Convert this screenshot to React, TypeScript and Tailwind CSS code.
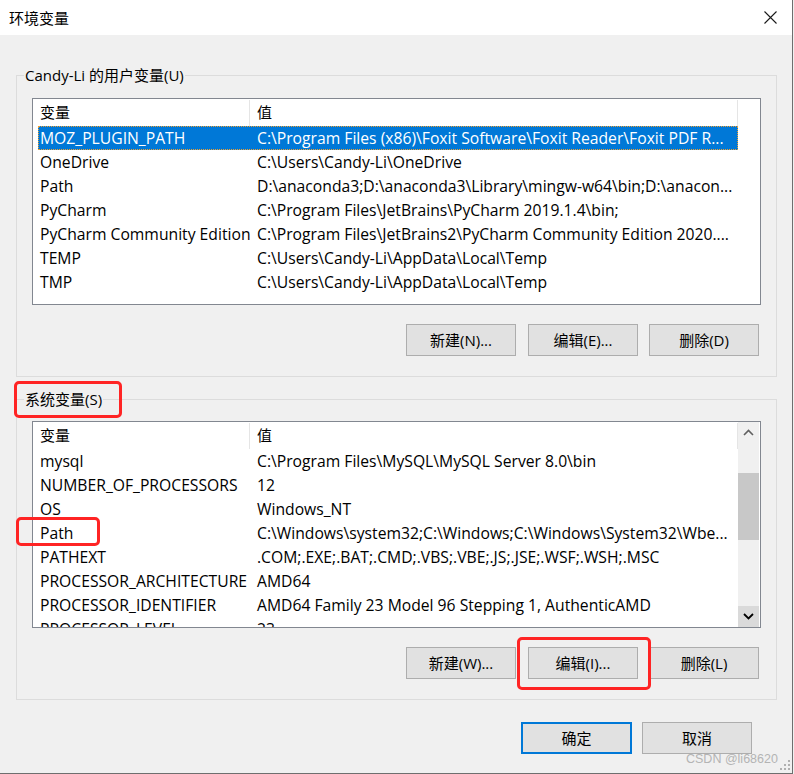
import React from "react";

type Row = [string, string];

const userRows: Row[] = [
  ["MOZ_PLUGIN_PATH", String.raw`C:\Program Files (x86)\Foxit Software\Foxit Reader\Foxit PDF R...`],
  ["OneDrive", String.raw`C:\Users\Candy-Li\OneDrive`],
  ["Path", String.raw`D:\anaconda3;D:\anaconda3\Library\mingw-w64\bin;D:\anacon...`],
  ["PyCharm", String.raw`C:\Program Files\JetBrains\PyCharm 2019.1.4\bin;`],
  ["PyCharm Community Edition", String.raw`C:\Program Files\JetBrains2\PyCharm Community Edition 2020....`],
  ["TEMP", String.raw`C:\Users\Candy-Li\AppData\Local\Temp`],
  ["TMP", String.raw`C:\Users\Candy-Li\AppData\Local\Temp`],
];

const sysRows: Row[] = [
  ["mysql", String.raw`C:\Program Files\MySQL\MySQL Server 8.0\bin`],
  ["NUMBER_OF_PROCESSORS", "12"],
  ["OS", "Windows_NT"],
  ["Path", String.raw`C:\Windows\system32;C:\Windows;C:\Windows\System32\Wbe...`],
  ["PATHEXT", ".COM;.EXE;.BAT;.CMD;.VBS;.VBE;.JS;.JSE;.WSF;.WSH;.MSC"],
  ["PROCESSOR_ARCHITECTURE", "AMD64"],
  ["PROCESSOR_IDENTIFIER", "AMD64 Family 23 Model 96 Stepping 1, AuthenticAMD"],
  ["PROCESSOR_LEVEL", "23"],
];

const Btn = ({ label, focus }: { label: string; focus?: boolean }) => (
  <button
    className={`h-[32px] w-[110px] bg-[#e1e1e1] text-[15px] text-black ${
      focus ? "border-2 border-[#0078d7] w-[111px]" : "border border-[#adadad]"
    }`}
  >
    {label}
  </button>
);

function Scrollbar() {
  return (
    <div className="w-[21px] h-full bg-[#f0f0f0] flex flex-col">
      <div className="h-[21px] flex items-center justify-center">
        <svg width="11" height="7" viewBox="0 0 11 7">
          <polyline points="1,6 5.5,1.5 10,6" fill="none" stroke="#606060" strokeWidth="1.6" />
        </svg>
      </div>
      <div className="h-[30px]" />
      <div className="h-[67px] bg-[#c8c8c8]" />
      <div className="flex-1" />
      <div className="h-[21px] bg-[#dadada] flex items-center justify-center">
        <svg width="11" height="7" viewBox="0 0 11 7">
          <polyline points="1,1 5.5,5.5 10,1" fill="none" stroke="#000" strokeWidth="1.8" />
        </svg>
      </div>
    </div>
  );
}

function VarList({ rows, selected, scroll }: { rows: Row[]; selected?: number; scroll?: boolean }) {
  return (
    <div className="w-[729px] h-[207px] border border-[#828790] bg-white flex overflow-hidden text-[15.7px]">
      <div className="w-[705px] flex flex-col">
        <div className="h-[27px] flex items-stretch shrink-0 text-[15px]">
          <div className="w-[217px] pl-[7px] pb-[2px] flex items-center border-r border-[#e5e5e5] mt-[1px]">变量</div>
          <div className="w-[488px] pl-[7px] pb-[2px] flex items-center border-r border-[#e5e5e5] mt-[1px]">值</div>
        </div>
        {rows.map(([k, v], i) => (
          <div
            key={k + i}
            className={`h-[24px] shrink-0 ml-[5px] w-[700px] flex items-center ${
              i === selected
                ? "bg-[#0078d7] text-white outline-1 outline-dotted outline-[#f0a030] -outline-offset-1"
                : ""
            }`}
          >
            <div className="w-[212px] pl-[2px] whitespace-nowrap overflow-hidden">{k}</div>
            <div className="flex-1 pl-[7px] whitespace-nowrap overflow-hidden">{v}</div>
          </div>
        ))}
      </div>
      {scroll && <Scrollbar />}
    </div>
  );
}

const RedBox = ({ cls }: { cls: string }) => (
  <span className={`absolute border-[3px] border-[#ff2424] rounded-[5px] pointer-events-none ${cls}`} />
);

export default function App() {
  return (
    <div
      className="w-[794px] h-[774px] bg-[#f0f0f0] relative text-[15px] text-black leading-[20px]"
      style={{ fontFamily: '"Open Sans", "Noto Sans CJK SC", sans-serif' }}
    >
      <div className="w-[793px] h-[774px] border-r border-b border-[#6e6e6e] flex flex-col">
        {/* title bar */}
        <div className="h-[35px] bg-white flex items-center justify-between pl-[9px] pr-[15px] shrink-0">
          <span className="text-[15px]">环境变量</span>
          <svg width="13" height="13" viewBox="0 0 13 13">
            <path d="M0.5 0.5 L12.5 12.5 M12.5 0.5 L0.5 12.5" stroke="#1a1a1a" strokeWidth="1.1" />
          </svg>
        </div>

        {/* user vars */}
        <fieldset className="ml-[16px] w-[760px] mt-[30px] border border-[#dcdcdc] px-0 pb-[20px]">
          <legend className="ml-[7px] px-[1px] leading-[20px]">Candy-Li 的用户变量(U)</legend>
          <div className="px-[15px]">
            <div className="mt-[13px]">
              <VarList rows={userRows} selected={0} />
            </div>
            <div className="flex mt-[19px] ml-[374px]">
              <Btn label="新建(N)..." />
              <div className="ml-[12px]">
                <Btn label="编辑(E)..." />
              </div>
              <div className="ml-[11px]">
                <Btn label="删除(D)" />
              </div>
            </div>
          </div>
        </fieldset>

        {/* system vars */}
        <fieldset className="ml-[16px] w-[760px] mt-[12px] border border-[#dcdcdc] px-0 pb-[20px]">
          <legend className="ml-[7px] px-[1px] leading-[20px] relative">
            系统变量(S)
            <RedBox cls="left-[-10px] top-[-8px] w-[108px] h-[37px]" />
          </legend>
          <div className="px-[15px]">
            <div className="mt-[12px] relative">
              <VarList rows={sysRows} scroll />
              <RedBox cls="left-[-16px] top-[96px] w-[84px] h-[29px]" />
            </div>
            <div className="flex mt-[19px] ml-[374px]">
              <Btn label="新建(W)..." />
              <div className="ml-[12px] relative">
                <Btn label="编辑(I)..." />
                <RedBox cls="left-[-11px] top-[-10px] w-[134px] h-[53px]" />
              </div>
              <div className="ml-[11px]">
                <Btn label="删除(L)" />
              </div>
            </div>
          </div>
        </fieldset>

        {/* OK / cancel */}
        <div className="flex mt-[22px] ml-[521px]">
          <Btn label="确定" focus />
          <div className="ml-[10px]">
            <Btn label="取消" />
          </div>
        </div>
      </div>

      {/* watermark + grip */}
      <span
        className="absolute left-[686px] top-[749px] text-[12.5px] text-[#b4b4b4] leading-[20px]"
        style={{ fontFamily: '"Liberation Sans", sans-serif' }}
      >
        CSDN @li68620
      </span>
      <svg className="absolute left-[780px] top-[760px]" width="12" height="12" viewBox="0 0 12 12">
        <rect x="8" y="0" width="2" height="2" fill="#b0b0b0" />
        <rect x="4" y="4" width="2" height="2" fill="#b0b0b0" />
        <rect x="8" y="4" width="2" height="2" fill="#b0b0b0" />
        <rect x="0" y="8" width="2" height="2" fill="#b0b0b0" />
        <rect x="4" y="8" width="2" height="2" fill="#b0b0b0" />
        <rect x="8" y="8" width="2" height="2" fill="#b0b0b0" />
      </svg>
    </div>
  );
}
